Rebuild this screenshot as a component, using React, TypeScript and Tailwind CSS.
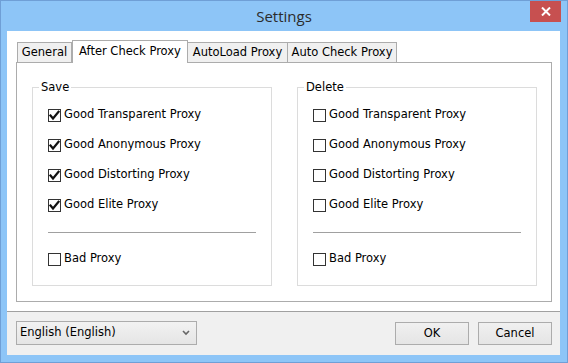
import React from "react";

function Check({ checked, label }: { checked: boolean; label: string }) {
  return (
    <div className="h-[30px] flex items-center">
      <span className="w-[13px] h-[13px] border border-[#333333] bg-white flex items-center justify-center shrink-0">
        {checked && (
          <svg width="11" height="11" viewBox="0 0 11 11">
            <path d="M1.5 5.5 L4 8.5 L9.5 1.8" fill="none" stroke="#111" strokeWidth="2.2" strokeLinecap="square" />
          </svg>
        )}
      </span>
      <span className="ml-[3px] text-black">{label}</span>
    </div>
  );
}

function Group({ title, checked }: { title: string; checked: boolean }) {
  return (
    <fieldset className="w-[240px] h-[207px] border border-[#dcdcdc] p-0 m-0 min-w-0">
      <legend className="ml-[6px] px-[2px] leading-[16px]">{title}</legend>
      <div className="pt-[5px] pl-[15px]">
        <Check checked={checked} label="Good Transparent Proxy" />
        <Check checked={checked} label="Good Anonymous Proxy" />
        <Check checked={checked} label="Good Distorting Proxy" />
        <Check checked={checked} label="Good Elite Proxy" />
        <div className="mt-[12px] w-[208px] h-px bg-[#a0a0a0]" />
        <div className="mt-[11px]">
          <Check checked={false} label="Bad Proxy" />
        </div>
      </div>
    </fieldset>
  );
}

export default function App() {
  const ui = { fontFamily: '"DejaVu Sans", Tahoma, sans-serif' };
  return (
    <div
      className="w-[568px] h-[363px] bg-[#8dc5f7] border border-[#6f9fd6] flex flex-col relative text-[11.5px] text-black"
      style={ui}
    >
      <div
        className="h-[30px] flex items-center justify-center text-[15px] text-[#2b2b2b]"
        style={{ fontFamily: '"Open Sans", "Noto Sans", sans-serif' }}
      >
        Settings
      </div>
      <div className="absolute top-0 right-[6px] w-[31px] h-[21px] bg-[#c75050] flex items-center justify-center">
        <svg width="10" height="9" viewBox="0 0 10 9">
          <path d="M1 0.5 L9 8.5 M9 0.5 L1 8.5" stroke="#fff" strokeWidth="2" />
        </svg>
      </div>
      <div className="ml-[6px] mr-[7px] h-[324px] bg-white flex flex-col">
        <div className="h-[280px] pl-[9px] pt-[9px] flex flex-col">
          <div className="h-[22px] ml-[1px] flex items-end relative z-10">
            <div className="w-[55px] h-[20px] bg-[#f0f0f0] border border-b-0 border-[#acacac] flex items-center justify-center">
              General
            </div>
            <div className="w-[116px] h-[23px] -mb-px bg-white border border-b-0 border-[#acacac] flex items-start pt-[2px] justify-center">
              After Check Proxy
            </div>
            <div className="w-[100px] h-[20px] bg-[#f0f0f0] border border-b-0 border-l-0 border-[#acacac] flex items-center justify-center">
              AutoLoad Proxy
            </div>
            <div className="w-[109px] h-[20px] bg-[#f0f0f0] border border-b-0 border-l-0 border-[#acacac] flex items-center justify-center">
              Auto Check Proxy
            </div>
          </div>
          <div className="w-[536px] h-[240px] border border-[#acacac] pl-[15px] pt-[16px] flex gap-[25px]">
            <Group title="Save" checked={true} />
            <Group title="Delete" checked={false} />
          </div>
        </div>
        <div className="flex-1 bg-[#f0f0f0] border-t border-[#a0a0a0] flex items-start pt-[9px] pl-[9px] pr-[8px]">
          <div className="w-[181px] h-[24px] border border-[#acacac] bg-gradient-to-b from-[#f2f2f2] to-[#e5e5e5] flex items-center pl-[3px] pr-[6px] justify-between">
            <span>English (English)</span>
            <svg width="8" height="6" viewBox="0 0 8 6">
              <path d="M1 1 L4 4 L7 1" fill="none" stroke="#666" strokeWidth="1.6" />
            </svg>
          </div>
          <div className="flex-1" />
          <div className="flex gap-[9px] pt-[1px]">
            <div className="w-[74px] h-[23px] border border-[#acacac] bg-gradient-to-b from-[#f0f0f0] to-[#e5e5e5] flex items-center justify-center">
              OK
            </div>
            <div className="w-[74px] h-[23px] border border-[#acacac] bg-gradient-to-b from-[#f0f0f0] to-[#e5e5e5] flex items-center justify-center">
              Cancel
            </div>
          </div>
        </div>
      </div>
    </div>
  );
}
